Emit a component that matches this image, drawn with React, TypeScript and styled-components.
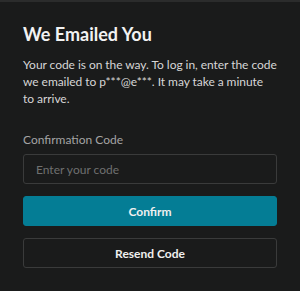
import React from "react";
import styled, { createGlobalStyle } from "styled-components";

const GlobalStyle = createGlobalStyle`
  html, body {
    margin: 0;
    padding: 0;
    background: #1a1b1b;
  }
  * {
    box-sizing: border-box;
  }
`;

const Panel = styled.div`
  width: 300px;
  height: 291px;
  background: #1a1b1b;
  border-top: 2px solid #2b2c2c;
  padding: 20px 23px 0;
  font-family: Lato, "Noto Sans", sans-serif;
  color: #e6e6e6;
`;

const Title = styled.h1`
  margin: 0;
  font-size: 18px;
  font-weight: 700;
  line-height: 24px;
  color: #f2f2f2;
`;

const Description = styled.p`
  margin: 10px 0 0;
  font-size: 12px;
  letter-spacing: -0.05px;
  line-height: 17px;
  color: #d6d6d6;
`;

const Form = styled.form`
  display: flex;
  flex-direction: column;
  margin-top: 25px;
`;

const Label = styled.label`
  font-size: 12px;
  line-height: 16px;
  color: #a4a4a4;
  margin-bottom: 6px;
`;

const CodeInput = styled.input`
  height: 30px;
  width: 100%;
  background: transparent;
  border: 1px solid #3a3b3b;
  border-radius: 3px;
  padding: 0 12px;
  font-family: inherit;
  font-size: 12px;
  color: #e6e6e6;
  outline: none;

  &::placeholder {
    color: #6f7070;
  }
`;

const Button = styled.button<{ $primary?: boolean }>`
  height: 30px;
  width: 100%;
  margin-top: 12px;
  border-radius: 3px;
  border: 1px solid ${(p) => (p.$primary ? "#047d95" : "#3a3b3b")};
  background: ${(p) => (p.$primary ? "#047d95" : "transparent")};
  color: #f0f0f0;
  font-family: inherit;
  font-size: 12px;
  font-weight: 700;
  cursor: pointer;
`;

export default function App() {
  return (
    <>
      <GlobalStyle />
      <Panel>
        <Title>We Emailed You</Title>
        <Description>
          Your code is on the way. To log in, enter the code
          <br />
          we emailed to p***@e***. It may take a minute
          <br />
          to arrive.
        </Description>
        <Form onSubmit={(e) => e.preventDefault()}>
          <Label htmlFor="code">Confirmation Code</Label>
          <CodeInput id="code" placeholder="Enter your code" />
          <Button type="submit" $primary>
            Confirm
          </Button>
          <Button type="button">Resend Code</Button>
        </Form>
      </Panel>
    </>
  );
}
